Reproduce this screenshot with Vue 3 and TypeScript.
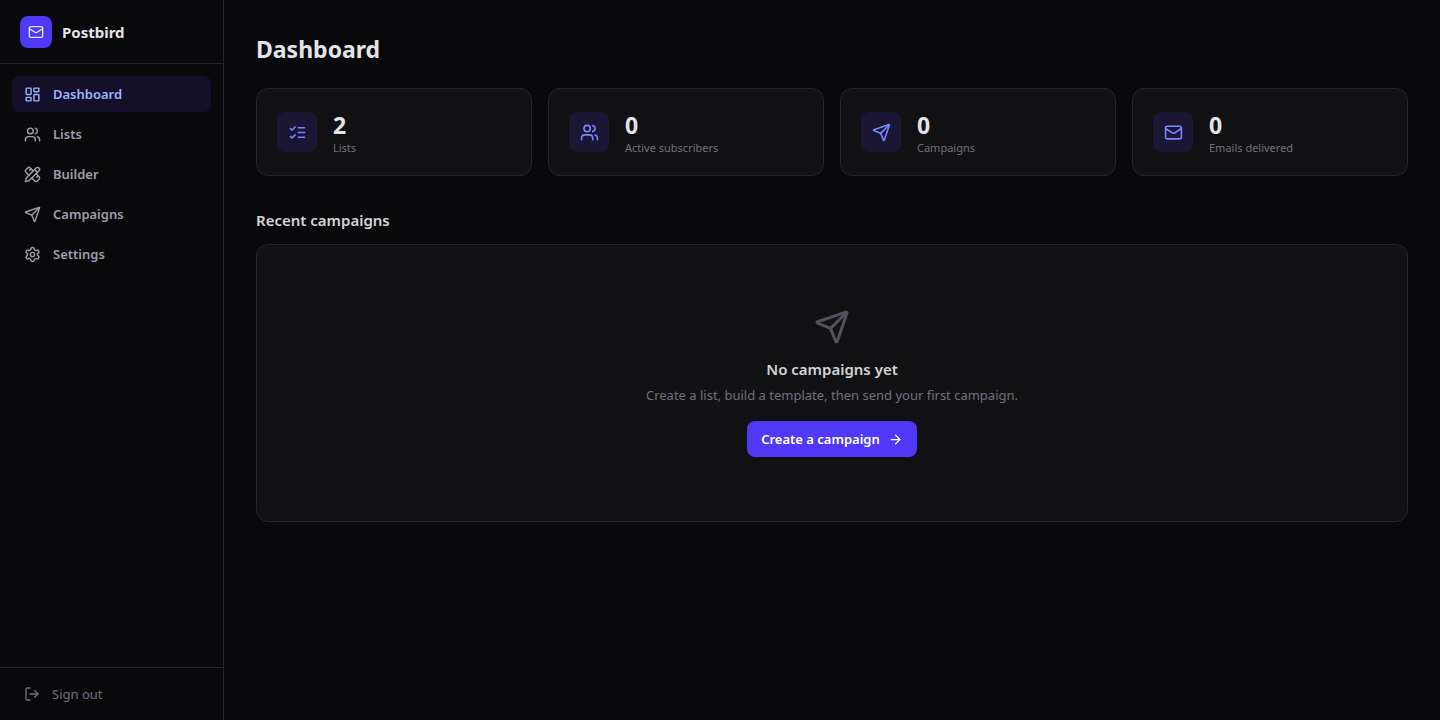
<script setup lang="ts">
type IconName = 'mail' | 'dashboard' | 'users' | 'builder' | 'send' | 'settings' | 'checks' | 'logout' | 'arrow'

const icons: Record<IconName, string[]> = {
  mail: [
    'M4 4h16a2 2 0 0 1 2 2v12a2 2 0 0 1-2 2H4a2 2 0 0 1-2-2V6a2 2 0 0 1 2-2z',
    'm22 7-8.991 5.727a2 2 0 0 1-2.009 0L2 7',
  ],
  dashboard: [
    'M4 3h5a1 1 0 0 1 1 1v7a1 1 0 0 1-1 1H4a1 1 0 0 1-1-1V4a1 1 0 0 1 1-1z',
    'M15 3h5a1 1 0 0 1 1 1v3a1 1 0 0 1-1 1h-5a1 1 0 0 1-1-1V4a1 1 0 0 1 1-1z',
    'M15 12h5a1 1 0 0 1 1 1v7a1 1 0 0 1-1 1h-5a1 1 0 0 1-1-1v-7a1 1 0 0 1 1-1z',
    'M4 16h5a1 1 0 0 1 1 1v3a1 1 0 0 1-1 1H4a1 1 0 0 1-1-1v-3a1 1 0 0 1 1-1z',
  ],
  users: [
    'M16 21v-2a4 4 0 0 0-4-4H6a4 4 0 0 0-4 4v2',
    'M16 3.128a4 4 0 0 1 0 7.744',
    'M22 21v-2a4 4 0 0 0-3-3.87',
    'M5 7a4 4 0 1 0 8 0a4 4 0 1 0-8 0',
  ],
  builder: [
    'M13 7 8.7 2.7a2.41 2.41 0 0 0-3.4 0L2.7 5.3a2.41 2.41 0 0 0 0 3.4L7 13',
    'm8 6 2-2',
    'm18 16 2-2',
    'm17 11 4.3 4.3c.94.94.94 2.46 0 3.4l-2.6 2.6c-.94.94-2.46.94-3.4 0L11 17',
    'M21.174 6.812a1 1 0 0 0-3.986-3.987L3.842 16.174a2 2 0 0 0-.5.83l-1.321 4.352a.5.5 0 0 0 .623.622l4.353-1.32a2 2 0 0 0 .83-.497z',
    'm15 5 4 4',
  ],
  send: [
    'M14.536 21.686a.5.5 0 0 0 .937-.024l6.5-19a.496.496 0 0 0-.635-.635l-19 6.5a.5.5 0 0 0-.024.937l7.93 3.18a2 2 0 0 1 1.112 1.11z',
    'm21.854 2.147-10.94 10.939',
  ],
  settings: [
    'M9.671 4.136a2.34 2.34 0 0 1 4.659 0 2.34 2.34 0 0 0 3.319 1.915 2.34 2.34 0 0 1 2.33 4.033 2.34 2.34 0 0 0 0 3.831 2.34 2.34 0 0 1-2.33 4.033 2.34 2.34 0 0 0-3.319 1.915 2.34 2.34 0 0 1-4.659 0 2.34 2.34 0 0 0-3.32-1.915 2.34 2.34 0 0 1-2.33-4.033 2.34 2.34 0 0 0 0-3.831A2.34 2.34 0 0 1 6.35 6.051a2.34 2.34 0 0 0 3.319-1.915',
    'M9 12a3 3 0 1 0 6 0a3 3 0 1 0-6 0',
  ],
  checks: ['M13 6h8', 'M13 12h8', 'M13 18h8', 'm3 17 2 2 4-4', 'm3 7 2 2 4-4'],
  logout: ['m16 17 5-5-5-5', 'M21 12H9', 'M9 21H5a2 2 0 0 1-2-2V5a2 2 0 0 1 2-2h4'],
  arrow: ['M5 12h14', 'm12 5 7 7-7 7'],
}

const nav: { label: string; icon: IconName; active?: boolean }[] = [
  { label: 'Dashboard', icon: 'dashboard', active: true },
  { label: 'Lists', icon: 'users' },
  { label: 'Builder', icon: 'builder' },
  { label: 'Campaigns', icon: 'send' },
  { label: 'Settings', icon: 'settings' },
]

const stats: { label: string; value: number; icon: IconName }[] = [
  { label: 'Lists', value: 2, icon: 'checks' },
  { label: 'Active subscribers', value: 0, icon: 'users' },
  { label: 'Campaigns', value: 0, icon: 'send' },
  { label: 'Emails delivered', value: 0, icon: 'mail' },
]
</script>

<template>
  <div class="app">
    <aside class="sidebar">
      <div class="brand">
        <span class="logo">
          <svg class="icon icon-sm" viewBox="0 0 24 24" aria-hidden="true">
            <path v-for="d in icons.mail" :key="d" :d="d" />
          </svg>
        </span>
        <span class="brand-name">Postbird</span>
      </div>
      <nav class="nav">
        <a v-for="item in nav" :key="item.label" href="#" class="nav-link" :class="{ active: item.active }">
          <svg class="icon icon-nav" viewBox="0 0 24 24" aria-hidden="true">
            <path v-for="d in icons[item.icon]" :key="d" :d="d" />
          </svg>
          <span>{{ item.label }}</span>
        </a>
      </nav>
      <div class="sidebar-foot">
        <button type="button" class="sign-out">
          <svg class="icon icon-sm" viewBox="0 0 24 24" aria-hidden="true">
            <path v-for="d in icons.logout" :key="d" :d="d" />
          </svg>
          <span>Sign out</span>
        </button>
      </div>
    </aside>

    <main class="main">
      <h1>Dashboard</h1>
      <div class="stats">
        <div v-for="stat in stats" :key="stat.label" class="card stat">
          <span class="tile">
            <svg class="icon icon-stat" viewBox="0 0 24 24" aria-hidden="true">
              <path v-for="d in icons[stat.icon]" :key="d" :d="d" />
            </svg>
          </span>
          <div>
            <p class="value">{{ stat.value }}</p>
            <p class="label">{{ stat.label }}</p>
          </div>
        </div>
      </div>
      <h2>Recent campaigns</h2>
      <section class="card empty">
        <svg class="icon icon-empty" viewBox="0 0 24 24" aria-hidden="true">
          <path v-for="d in icons.send" :key="d" :d="d" />
        </svg>
        <h3>No campaigns yet</h3>
        <p class="hint">Create a list, build a template, then send your first campaign.</p>
        <button type="button" class="cta">
          <span>Create a campaign</span>
          <svg class="icon icon-arrow" viewBox="0 0 24 24" aria-hidden="true">
            <path v-for="d in icons.arrow" :key="d" :d="d" />
          </svg>
        </button>
      </section>
    </main>
  </div>
</template>

<style>
body {
  margin: 0;
  background: #09090b;
}
</style>

<style scoped>
.app,
.app * {
  box-sizing: border-box;
}
.app {
  display: flex;
  min-height: 100vh;
  background: #09090b;
  color: #e4e4e7;
  font-family: 'Segoe UI', 'Noto Sans', sans-serif;
  font-size: 13px;
  line-height: 20px;
}
h1,
h2,
h3,
p {
  margin: 0;
}
button {
  font: inherit;
  border: 0;
  cursor: pointer;
}
.icon {
  flex-shrink: 0;
  fill: none;
  stroke: currentColor;
  stroke-width: 2;
  stroke-linecap: round;
  stroke-linejoin: round;
}
.icon-sm {
  width: 16px;
  height: 16px;
}
.icon-nav {
  width: 17px;
  height: 17px;
}
.icon-stat {
  width: 19px;
  height: 19px;
}
.icon-arrow {
  width: 15px;
  height: 15px;
}
.icon-empty {
  width: 36px;
  height: 36px;
  color: #52525c;
}
.sidebar {
  display: flex;
  flex-direction: column;
  flex-shrink: 0;
  width: 224px;
  border-right: 1px solid #27272a;
}
.brand {
  display: flex;
  align-items: center;
  gap: 10px;
  height: 64px;
  padding: 0 20px;
  border-bottom: 1px solid #27272a;
}
.logo {
  display: grid;
  place-items: center;
  width: 32px;
  height: 32px;
  border-radius: 8px;
  background: #4f39f6;
}
.brand-name {
  font-size: 15px;
  font-weight: 700;
}
.nav {
  display: flex;
  flex: 1;
  flex-direction: column;
  gap: 4px;
  padding: 12px;
}
.nav-link {
  display: flex;
  align-items: center;
  gap: 12px;
  padding: 8px 12px;
  border-radius: 8px;
  color: #9f9fa9;
  font-weight: 600;
  text-decoration: none;
}
.nav-link.active {
  background: #130f2b;
  color: #a3b3ff;
}
.sidebar-foot {
  padding: 8px 12px;
  border-top: 1px solid #27272a;
}
.sign-out {
  display: flex;
  align-items: center;
  gap: 12px;
  width: 100%;
  padding: 8px 12px;
  border-radius: 8px;
  background: transparent;
  color: #71717b;
}
.main {
  flex: 1;
  min-width: 0;
  padding: 32px;
}
h1 {
  margin-bottom: 22px;
  font-size: 23px;
  font-weight: 700;
  line-height: 34px;
}
.card {
  border: 1px solid #27272a;
  border-radius: 12px;
  background: #111113;
}
.stats {
  display: grid;
  grid-template-columns: repeat(4, 1fr);
  gap: 16px;
  margin-bottom: 32px;
}
.stat {
  display: flex;
  align-items: center;
  gap: 16px;
  padding: 20px;
}
.tile {
  display: grid;
  place-items: center;
  width: 40px;
  height: 40px;
  border-radius: 8px;
  background: #1a1633;
  color: #7c86ff;
}
.value {
  font-size: 23px;
  font-weight: 700;
  line-height: 32px;
}
.label {
  color: #71717b;
  font-size: 11px;
  line-height: 14px;
}
h2 {
  margin-bottom: 12px;
  color: #d4d4d8;
  font-size: 15px;
  font-weight: 600;
  line-height: 24px;
}
.empty {
  display: flex;
  flex-direction: column;
  align-items: center;
  padding: 64px 24px;
}
h3 {
  margin-top: 12px;
  color: #d4d4d8;
  font-size: 15px;
  font-weight: 600;
  line-height: 24px;
}
.hint {
  margin: 4px 0 16px;
  color: #71717b;
}
.cta {
  display: flex;
  align-items: center;
  gap: 8px;
  padding: 8px 14px;
  border-radius: 8px;
  background: #4f39f6;
  color: #fff;
  font-weight: 600;
}
</style>
